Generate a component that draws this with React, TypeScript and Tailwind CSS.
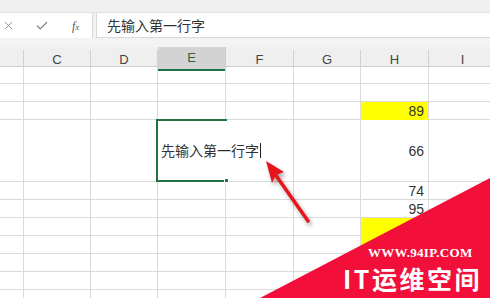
import { X, Check } from "lucide-react";

const cols = ["", "C", "D", "E", "F", "G", "H", "I"];
const rowHeights = [17, 18, 18, 62, 18, 18, 18, 18, 18, 18, 18];

// values in column H, by row index
const hValues: Record<number, { v?: string; yellow?: boolean; center?: boolean }> = {
  2: { v: "89", yellow: true },
  3: { v: "66", center: true },
  4: { v: "74" },
  5: { v: "95" },
  6: { yellow: true },
  7: { yellow: true },
};

const sans = { fontFamily: '"Liberation Sans", "Noto Sans CJK SC", sans-serif' };
const cjk = { fontFamily: '"Noto Sans CJK SC", "Liberation Sans", sans-serif' };

const App = () => {
  return (
    <div className="relative w-[490px] h-[298px] overflow-hidden bg-white" style={sans}>
      {/* top strip */}
      <div className="h-[13px] bg-[#f0f0f0] border-b border-[#e2e2e2]" />

      {/* formula bar */}
      <div className="h-[34px] bg-[#f3f3f3] flex items-start">
        <div className="w-[93px] h-[25px] bg-white border-r border-[#dadada] flex items-center text-[#7a7a7a]">
          <X className="ml-[2px] w-[13px] h-[13px]" strokeWidth={1.5} />
          <Check className="ml-[20px] w-[14px] h-[14px]" strokeWidth={2} />
          <span className="ml-[23px] text-[12px] italic text-[#555]" style={{ fontFamily: '"Liberation Serif", serif' }}>
            f<span className="text-[9px]">x</span>
          </span>
        </div>
        <div className="ml-[3px] flex-1 h-[25px] bg-white border-l border-b border-[#d8d8d8] flex items-center pl-[10px] text-[14px] text-[#333]" style={cjk}>
          先输入第一行字
        </div>
      </div>

      {/* column headers */}
      <div className="grid grid-cols-[24px_67px_67px_68px_68px_67px_68px_68px] h-[20px] bg-[#efefef] border-b border-[#cfcfcf]">
        {cols.map((c, i) => (
          <div
            key={i}
            className={
              c === "E"
                ? "flex items-end justify-center pb-[1px] bg-[#d3d3d3] border-b-2 border-[#217346] text-[13px] text-[#2f5f44] border-r border-r-[#c8c8c8]"
                : "flex items-end justify-center pb-[1px] text-[13px] text-[#444] border-r border-[#d0d0d0] mt-[3px]"
            }
          >
            {c}
          </div>
        ))}
      </div>

      {/* grid body */}
      <div className="grid grid-cols-[24px_67px_67px_68px_68px_67px_68px_68px]">
        {rowHeights.map((h, r) =>
          cols.map((c, ci) => {
            const hv = c === "H" ? hValues[r] : undefined;
            return (
              <div
                key={`${r}-${ci}`}
                className={`relative border-r border-b border-[#dadada] flex justify-end px-[4px] text-[14px] text-[#333] ${
                  hv?.yellow ? "bg-[#ffff00] border-b-[#ffff00]" : ""
                } ${hv?.center ? "items-center" : "items-end"}`}
                style={{ height: h }}
              >
                {hv?.v && <span className="leading-[16px]">{hv.v}</span>}
                {c === "E" && r === 3 && (
                  <>
                    <div className="absolute z-10 left-[-2px] top-0 w-[106px] h-[61px] bg-white flex items-center pl-[5px] text-[14px] text-[#333] whitespace-nowrap" style={cjk}>
                      先输入第一行字
                      <span className="ml-[1px] w-[1px] h-[15px] bg-[#222]" />
                    </div>
                    <div className="absolute z-20 left-[-2px] top-[-1px] w-[71px] h-[63px] border-l-2 border-t-2 border-b-2 border-[#217346]" />
                    <div className="absolute z-20 left-[66px] top-[58px] w-[5px] h-[5px] bg-[#217346] border border-white" />
                  </>
                )}
              </div>
            );
          })
        )}
      </div>

      {/* red arrow */}
      <svg className="absolute left-0 top-0 z-30" width="490" height="298" style={{ filter: "drop-shadow(2px 3px 2px rgba(0,0,0,0.35))" }}>
        <line x1="308" y1="221" x2="275" y2="174" stroke="#e8141c" strokeWidth="3.5" strokeLinecap="round" />
        <polygon points="266,161 284,172 276,175 272,183" fill="#e8141c" />
      </svg>

      {/* watermark banner */}
      <svg className="absolute left-0 top-0 z-40" width="490" height="298">
        <polygon points="260,298 490,178 490,298" fill="#f2103a" />
      </svg>
      <div
        className="absolute z-50 left-[368px] top-[245px] text-[13px] leading-[16px] font-bold text-white whitespace-nowrap tracking-[0.3px]"
        style={{ fontFamily: '"Liberation Serif", serif' }}
      >
        WWW.94IP.COM
      </div>
      <div
        className="absolute z-50 left-[343px] top-[262px] text-[25px] font-bold text-white leading-[32px] tracking-[2.5px] whitespace-nowrap"
        style={cjk}
      >
        IT运维空间
      </div>
    </div>
  );
};

export default App;
